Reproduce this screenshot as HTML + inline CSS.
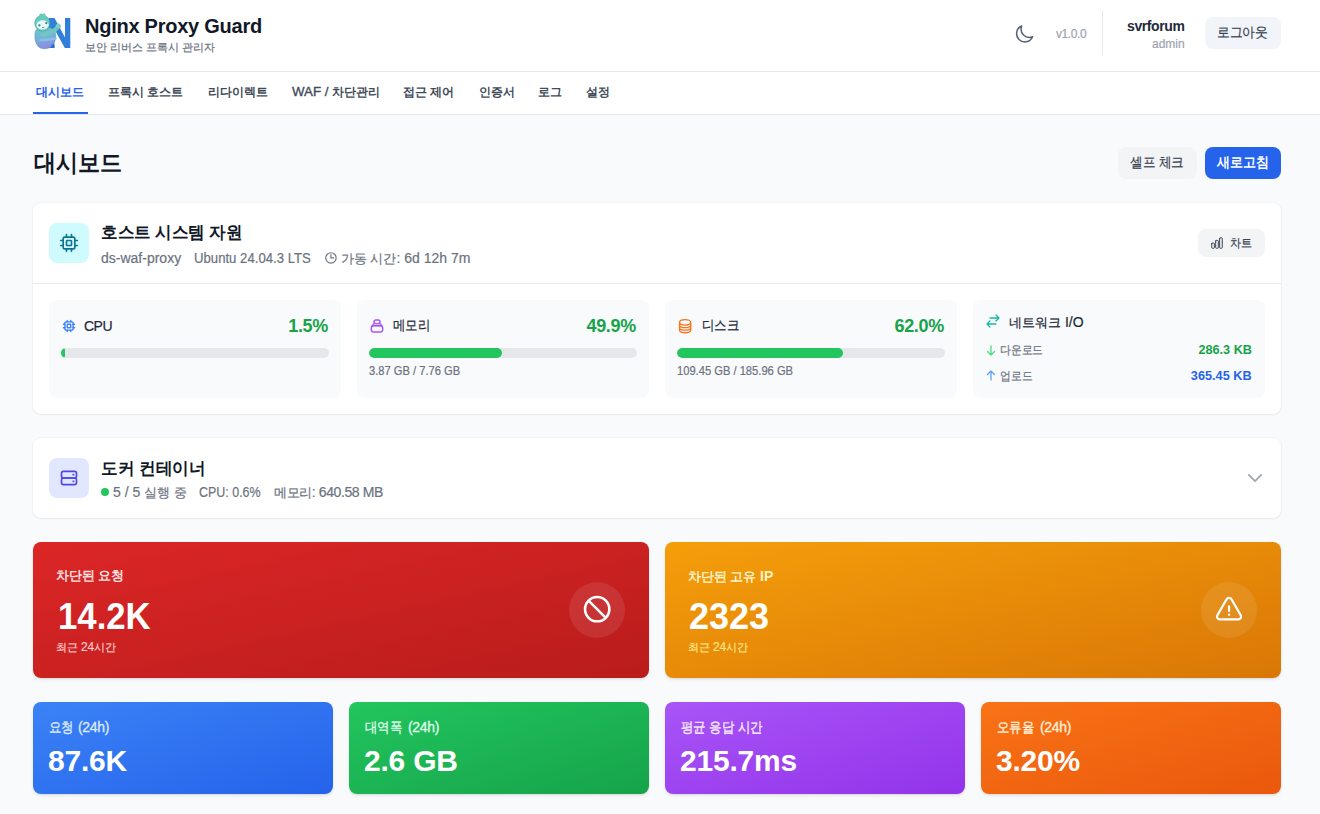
<!DOCTYPE html>
<html><head><meta charset="utf-8">
<style>
*{box-sizing:border-box;margin:0;padding:0}
html,body{width:1320px;height:814px;overflow:hidden}
body{font-family:"Liberation Sans",sans-serif;background:#f8fafc;color:#111827;position:relative}
.a{position:absolute;white-space:nowrap}
#hdr{position:absolute;left:0;top:0;width:1320px;height:72px;background:#fff;border-bottom:1px solid #e2e8f0}
#nav{position:absolute;left:0;top:72px;width:1320px;height:43px;background:#fff;border-bottom:1px solid #e2e8f0}
.nv{position:absolute;top:12px;font-size:12px;font-weight:700;color:#414b5a;line-height:16px;white-space:nowrap}
.card{position:absolute;background:#fff;border-radius:8px;box-shadow:0 1px 2px rgba(0,0,0,.05),0 0 0 1px rgba(17,24,39,.03)}
.tile{position:absolute;background:#f9fafb;border-radius:8px;width:292px;height:98px;top:300px}
.bar{position:absolute;left:12px;top:48px;width:268px;height:10px;border-radius:5px;background:#e5e7eb;overflow:hidden}
.bar i{display:block;height:10px;background:#22c55e;border-radius:5px}
.btn{position:absolute;border-radius:8px}
.big{position:absolute;border-radius:8px;color:#fff;box-shadow:0 2px 4px -1px rgba(0,0,0,.1),0 1px 2px rgba(0,0,0,.06)}
.st{-webkit-text-stroke:.35px currentColor}
.s2{-webkit-text-stroke:.2px currentColor}
</style></head>
<body>
<div id="hdr">
  <svg class="a" style="left:28px;top:8px" width="50" height="50" viewBox="0 0 50 50">
    <defs><linearGradient id="sl" x1="0" y1="0" x2="0.25" y2="1"><stop offset="0" stop-color="#66cdbf"/><stop offset=".5" stop-color="#74b4d8"/><stop offset="1" stop-color="#8d8ce4"/></linearGradient></defs>
    <path d="M20.5 10H26.5L37 29.5V10H42.3V40H36.8L26.3 21V40H20.5Z" fill="#2f7fdb"/>
    <path d="M7.2 24C6 32 8 40.5 16 40.8C24 41 27.5 35 27.8 28C28 22 24 19 18 19.5C12 20 8 20 7.2 24Z" fill="url(#sl)" stroke="#4a8fb0" stroke-width=".5"/>
    <ellipse cx="14.3" cy="15.2" rx="7.6" ry="8" fill="#66cbbf" stroke="#3f9a9c" stroke-width=".5"/>
    <path d="M11.5 7.6l1.6-1.4 1.4 1.2 1.4-1.2 1.2 1.8" stroke="#66cbbf" stroke-width="1.6" fill="none"/>
    <ellipse cx="14.6" cy="16.9" rx="6.1" ry="4.6" fill="#e8f8f4"/>
    <circle cx="11.4" cy="17.3" r="1.15" fill="#367c90"/><circle cx="18.3" cy="15.1" r="1.15" fill="#367c90"/>
    <path d="M14 19.3q1.2.9 2.4 0" stroke="#367c90" stroke-width=".8" fill="none"/>
    <path d="M14.5 26.5c5 0 11-2.5 15-7" stroke="#6fc7c4" stroke-width="4.2" fill="none" stroke-linecap="round"/>
    <circle cx="30" cy="18.2" r="2.5" fill="#7fd3c8" stroke="#4a9fa5" stroke-width=".4"/>
    <path d="M12.5 32c4.5 0 9-.5 15-1.5" stroke="#86c2e0" stroke-width="2.6" fill="none" stroke-linecap="round"/>
    <path d="M23.5 36.5h3v3.5h-3z" fill="#2a6fc4"/>
  </svg>
  <div class="a" style="left:85px;top:14px;font-size:20px;font-weight:700;line-height:24px;color:#111827;letter-spacing:-0.25px">Nginx Proxy Guard</div>
  <div class="a s2" style="left:85px;top:39px;font-size:11px;line-height:16px;color:#6b7280">보안 리버스 프록시 관리자</div>

  <svg class="a" style="left:1014px;top:24px" width="20.5" height="20.5" fill="none" stroke-linecap="round" stroke-linejoin="round" viewBox="0 0 24 24" stroke="#52627a" stroke-width="1.8"><path d="M21.752 15.002A9.72 9.72 0 0 1 18 15.75c-5.385 0-9.75-4.365-9.75-9.75 0-1.33.266-2.597.748-3.752A9.753 9.753 0 0 0 3 11.25C3 16.635 7.365 21 12.75 21a9.753 9.753 0 0 0 9.002-5.998Z"/></svg>
  <div class="a s2" style="left:1056px;top:26px;font-size:12px;line-height:16px;color:#9ca3af;letter-spacing:-0.4px">v1.0.0</div>
  <div class="a" style="left:1102px;top:11px;width:1px;height:44px;background:#e5e7eb"></div>
  <div class="a" style="left:1127px;top:16px;font-size:14px;font-weight:700;line-height:20px;color:#1f2937;letter-spacing:-0.4px">svrforum</div>
  <div class="a s2" style="left:1152px;top:36px;font-size:12px;line-height:16px;color:#9ca3af">admin</div>
  <div class="btn" style="left:1205px;top:17px;width:76px;height:32px;background:#f1f5f9"></div>
  <div class="a s2" style="left:1217px;top:24px;font-size:13.8px;line-height:18px;color:#374151;transform-origin:0 0;transform:scaleX(.91)">로그아웃</div>
</div>

<div id="nav">
  <div class="a" style="left:33px;top:40px;width:55px;height:2px;background:#2563eb"></div>
  <div class="nv" style="left:36px;color:#2563eb">대시보드</div>
  <div class="nv" style="left:108px">프록시 호스트</div>
  <div class="nv" style="left:208px">리다이렉트</div>
  <div class="nv" style="left:292px"><span style="font-size:13.3px;font-weight:400;-webkit-text-stroke:.35px currentColor">WAF / </span>차단관리</div>
  <div class="nv" style="left:403px">접근 제어</div>
  <div class="nv" style="left:479px">인증서</div>
  <div class="nv" style="left:538px">로그</div>
  <div class="nv" style="left:586px">설정</div>
</div>

<div class="a" style="left:34px;top:147px;font-size:23.5px;font-weight:700;line-height:32px;color:#111827;transform-origin:0 0;transform:scaleX(.92)">대시보드</div>
<div class="btn" style="left:1118px;top:147px;width:79px;height:32px;background:#f3f4f6"></div>
<div class="a s2" style="left:1130px;top:154px;font-size:13.8px;line-height:18px;color:#374151;transform-origin:0 0;transform:scaleX(.9)">셀프 체크</div>
<div class="btn" style="left:1205px;top:147px;width:76px;height:32px;background:#2563eb"></div>
<div class="a" style="left:1217px;top:154px;font-size:13.5px;font-weight:700;line-height:18px;color:#fff;transform-origin:0 0;transform:scaleX(.93)">새로고침</div>

<!-- host card -->
<div class="card" style="left:33px;top:203px;width:1248px;height:211px">
  <div class="a" style="left:16px;top:20px;width:40px;height:40px;border-radius:8px;background:#cffafe"></div>
  <svg class="a" style="left:26px;top:30px" width="20" height="20" viewBox="0 0 24 24" fill="none" stroke="#0e7490" stroke-width="2" stroke-linecap="round" stroke-linejoin="round"><rect x="5" y="5" width="14" height="14" rx="2"/><rect x="9" y="9" width="6" height="6" rx="1"/><path d="M9 2v3M15 2v3M9 19v3M15 19v3M2 9h3M2 15h3M19 9h3M19 15h3"/></svg>
  <div class="a" style="left:68px;top:19px;font-size:17.3px;font-weight:700;line-height:20px;color:#111827;transform-origin:0 0;transform:scaleX(.972)">호스트 시스템 자원</div>
  <div class="a s2" style="left:68px;top:46px;font-size:14px;line-height:18px;color:#6b7280">ds-waf-proxy</div>
  <div class="a s2" style="left:161px;top:46px;font-size:14px;line-height:18px;color:#6b7280;transform-origin:0 0;transform:scaleX(.94)">Ubuntu 24.04.3 LTS</div>
  <svg class="a" style="left:291px;top:47.5px" width="13.9" height="13.9" fill="none" stroke-linecap="round" stroke-linejoin="round" viewBox="0 0 24 24" stroke="#6b7280" stroke-width="2"><path d="M12 6v6h4.5m4.5 0a9 9 0 1 1-18 0 9 9 0 0 1 18 0Z"/></svg>
  <div class="a s2" style="left:308px;top:46px;font-size:14px;line-height:18px;color:#6b7280"><span style="font-size:12.5px">가동 시간</span>: 6d 12h 7m</div>
  <div class="btn" style="left:1165px;top:26px;width:67px;height:28px;background:#f3f4f6"></div>
  <svg class="a" style="left:1177.2px;top:33px" width="14" height="14" fill="none" stroke-linecap="round" stroke-linejoin="round" viewBox="0 0 24 24" stroke="#374151" stroke-width="1.7"><path d="M3 13.125C3 12.504 3.504 12 4.125 12h2.25c.621 0 1.125.504 1.125 1.125v6.75C7.5 20.496 6.996 21 6.375 21h-2.25A1.125 1.125 0 0 1 3 19.875v-6.75ZM9.75 8.625c0-.621.504-1.125 1.125-1.125h2.25c.621 0 1.125.504 1.125 1.125v11.25c0 .621-.504 1.125-1.125 1.125h-2.25a1.125 1.125 0 0 1-1.125-1.125V8.625ZM16.5 4.125c0-.621.504-1.125 1.125-1.125h2.25C20.496 3 21 3.504 21 4.125v15.75c0 .621-.504 1.125-1.125 1.125h-2.25a1.125 1.125 0 0 1-1.125-1.125V4.125Z"/></svg>
  <div class="a s2" style="left:1197px;top:31px;font-size:12px;line-height:18px;color:#374151;transform-origin:0 0;transform:scaleX(.92)">차트</div>
  <div class="a" style="left:0;top:80px;width:1248px;height:1px;background:#e5e7eb"></div>
</div>

<div class="tile" style="left:49px">
  <svg class="a" style="left:13px;top:19px" width="14" height="14" viewBox="0 0 24 24" fill="none" stroke="#3b82f6" stroke-width="2.4" stroke-linecap="round"><rect x="5" y="5" width="14" height="14" rx="2"/><rect x="9" y="9" width="6" height="6" rx="1"/><path d="M9 2.5v2.5M15 2.5v2.5M9 19v2.5M15 19v2.5M2.5 9h2.5M2.5 15h2.5M19 9h2.5M19 15h2.5"/></svg>
  <div class="a s2" style="left:35px;top:17px;font-size:14px;line-height:18px;color:#1f2937;letter-spacing:-0.5px">CPU</div>
  <div class="a" style="right:13px;top:15px;font-size:18px;font-weight:700;line-height:22px;color:#16a34a;letter-spacing:-0.3px">1.5%</div>
  <div class="bar"><i style="width:4px"></i></div>
</div>
<div class="tile" style="left:357px">
  <svg class="a" style="left:12px;top:18px" width="16" height="16" viewBox="0 0 24 24" fill="none" stroke="#a855f7" stroke-width="2.2" stroke-linejoin="round"><rect x="7.5" y="3" width="9" height="5.5" rx="2.7"/><path d="M7 8.5h10l2.5 3H4.5z" fill="#e9d5ff" stroke-width="1.6"/><rect x="3.5" y="11.5" width="17" height="9.5" rx="3.5"/></svg>
  <div class="a s2" style="left:36px;top:16px;font-size:14.2px;line-height:18px;color:#1f2937;transform-origin:0 0;transform:scaleX(.89)">메모리</div>
  <div class="a" style="right:13px;top:15px;font-size:18px;font-weight:700;line-height:22px;color:#16a34a;letter-spacing:-0.3px">49.9%</div>
  <div class="bar"><i style="width:133px"></i></div>
  <div class="a s2" style="left:12px;top:63px;font-size:12px;line-height:16px;color:#6b7280;transform-origin:0 0;transform:scaleX(.93)">3.87 GB / 7.76 GB</div>
</div>
<div class="tile" style="left:665px">
  <svg class="a" style="left:12px;top:18px" width="16.3" height="16.3" fill="none" stroke-linecap="round" stroke-linejoin="round" viewBox="0 0 24 24" stroke="#f97316" stroke-width="1.9"><path d="M20.25 6.375c0 2.278-3.694 4.125-8.25 4.125S3.75 8.653 3.75 6.375m16.5 0c0-2.278-3.694-4.125-8.25-4.125S3.75 4.097 3.75 6.375m16.5 0v11.25c0 2.278-3.694 4.125-8.25 4.125s-8.25-1.847-8.25-4.125V6.375m16.5 0v3.75m-16.5-3.75v3.75m16.5 0v3.75C20.25 16.153 16.556 18 12 18s-8.25-1.847-8.25-4.125v-3.75m16.5 0c0 2.278-3.694 4.125-8.25 4.125s-8.25-1.847-8.25-4.125"/></svg>
  <div class="a s2" style="left:37px;top:16px;font-size:14.2px;line-height:18px;color:#1f2937;transform-origin:0 0;transform:scaleX(.89)">디스크</div>
  <div class="a" style="right:13px;top:15px;font-size:18px;font-weight:700;line-height:22px;color:#16a34a;letter-spacing:-0.3px">62.0%</div>
  <div class="bar"><i style="width:166px"></i></div>
  <div class="a s2" style="left:12px;top:63px;font-size:12px;line-height:16px;color:#6b7280;transform-origin:0 0;transform:scaleX(.93)">109.45 GB / 185.96 GB</div>
</div>
<div class="tile" style="left:973px">
  <svg class="a" style="left:12.3px;top:13.4px" width="16" height="16" fill="none" stroke-linecap="round" stroke-linejoin="round" viewBox="0 0 24 24" stroke="#14b8a6" stroke-width="1.9"><path d="M7.5 21 3 16.5m0 0L7.5 12M3 16.5h13.5m0-13.5L21 7.5m0 0L16.5 12M21 7.5H7.5"/></svg>
  <div class="a s2" style="left:36px;top:13px;font-size:13px;line-height:18px;color:#1f2937"><span>네트워크</span><span style="font-size:14px"> I/O</span></div>
  <svg class="a" style="left:13px;top:45px" width="10" height="11" viewBox="0 0 10 11" fill="none" stroke="#4ade80" stroke-width="1.3" stroke-linecap="round" stroke-linejoin="round"><path d="M5 1v9M1.5 6.5L5 10l3.5-3.5"/></svg><div class="a s2" style="left:27px;top:42px;font-size:12.2px;line-height:16px;color:#6b7280;transform-origin:0 0;transform:scaleX(.9)">다운로드</div>
  <div class="a" style="right:13px;top:42px;font-size:13.5px;font-weight:700;line-height:16px;color:#16a34a;transform-origin:100% 0;transform:scaleX(.94)">286.3 KB</div>
  <svg class="a" style="left:13px;top:70px" width="10" height="11" viewBox="0 0 10 11" fill="none" stroke="#60a5fa" stroke-width="1.3" stroke-linecap="round" stroke-linejoin="round"><path d="M5 10V1M1.5 4.5L5 1l3.5 3.5"/></svg><div class="a s2" style="left:27px;top:68px;font-size:12.2px;line-height:16px;color:#6b7280;transform-origin:0 0;transform:scaleX(.9)">업로드</div>
  <div class="a" style="right:13px;top:68px;font-size:13.5px;font-weight:700;line-height:16px;color:#2563eb;transform-origin:100% 0;transform:scaleX(.94)">365.45 KB</div>
</div>

<!-- docker card -->
<div class="card" style="left:33px;top:438px;width:1248px;height:80px">
  <div class="a" style="left:16px;top:20px;width:40px;height:40px;border-radius:8px;background:#e0e7ff"></div>
  <svg class="a" style="left:26px;top:30px" width="20" height="20" viewBox="0 0 24 24" fill="none" stroke="#4f46e5" stroke-width="2"><rect x="3" y="4" width="18" height="8" rx="2.5"/><rect x="3" y="12" width="18" height="8" rx="2.5"/><path d="M17 8h.5M17 16h.5" stroke-linecap="round"/></svg>
  <div class="a" style="left:68px;top:20.5px;font-size:17.1px;font-weight:700;line-height:20px;color:#111827;transform-origin:0 0;transform:scaleX(.98)">도커 컨테이너</div>
  <div class="a" style="left:68px;top:50px;width:8px;height:8px;border-radius:4px;background:#22c55e"></div>
  <div class="a s2" style="left:80px;top:45px;font-size:14px;line-height:18px;color:#6b7280">5 / 5 <span style="font-size:12.5px">실행 중</span></div>
  <div class="a s2" style="left:166px;top:45px;font-size:14px;line-height:18px;color:#6b7280;transform-origin:0 0;transform:scaleX(.89)">CPU: 0.6%</div>
  <div class="a s2" style="left:241px;top:45px;font-size:14px;line-height:18px;color:#6b7280;letter-spacing:-0.4px"><span style="font-size:12.5px">메모리</span>: 640.58 MB</div>
  <svg class="a" style="left:1212px;top:30px" width="20" height="20" fill="none" stroke-linecap="round" stroke-linejoin="round" viewBox="0 0 24 24" stroke="#9ca3af" stroke-width="2"><path d="m19.5 8.25-7.5 7.5-7.5-7.5"/></svg>
</div>

<!-- big blocked cards -->
<div class="big" style="left:33px;top:542px;width:616px;height:136px;background:linear-gradient(to bottom right,#dc2626,#b91c1c)">
  <div class="a" style="left:23px;top:26px;font-size:12.6px;font-weight:700;line-height:16px;color:#fee2e2">차단된 요청</div>
  <div class="a" style="left:25px;top:53px;font-size:36px;font-weight:700;line-height:44px;transform-origin:0 0;transform:scaleX(.965)">14.2K</div>
  <div class="a s2" style="left:23px;top:97px;font-size:12px;line-height:16px;color:#fecaca"><span style="font-size:10.5px">최근 </span>24<span style="font-size:10.5px">시간</span></div>
  <div class="a" style="left:536px;top:40px;width:56px;height:56px;border-radius:28px;background:rgba(255,255,255,.09)"></div>
  <svg class="a" style="left:547.8px;top:51.4px" width="32.4" height="32.4" fill="none" stroke-linecap="round" stroke-linejoin="round" viewBox="0 0 24 24" stroke="#fff" stroke-width="1.9"><path d="M18.364 18.364A9 9 0 0 0 5.636 5.636m12.728 12.728A9 9 0 0 1 5.636 5.636m12.728 12.728L5.636 5.636"/></svg>
</div>
<div class="big" style="left:665px;top:542px;width:616px;height:136px;background:linear-gradient(to bottom right,#f59e0b,#d97706)">
  <div class="a" style="left:23px;top:26px;font-size:12.6px;font-weight:700;line-height:16px;color:#fef3c7">차단된 고유 <span style="font-size:14px">IP</span></div>
  <div class="a" style="left:24px;top:53px;font-size:36px;font-weight:700;line-height:44px">2323</div>
  <div class="a s2" style="left:23px;top:97px;font-size:12px;line-height:16px;color:#fde68a"><span style="font-size:10.5px">최근 </span>24<span style="font-size:10.5px">시간</span></div>
  <div class="a" style="left:536px;top:40px;width:56px;height:56px;border-radius:28px;background:rgba(255,255,255,.09)"></div>
  <svg class="a" style="left:548.9px;top:52.6px" width="30.1" height="30.1" fill="none" stroke-linecap="round" stroke-linejoin="round" viewBox="0 0 24 24" stroke="#fff" stroke-width="1.8"><path d="M12 9v3.75m-9.303 3.376c-.866 1.5.217 3.374 1.948 3.374h14.71c1.73 0 2.813-1.874 1.948-3.374L13.949 3.378c-.866-1.5-3.032-1.5-3.898 0L2.697 16.126ZM12 15.75h.007v.008H12v-.008Z"/></svg>
</div>

<!-- small stat cards -->
<div class="big" style="left:33px;top:702px;width:300px;height:92px;background:linear-gradient(to bottom right,#3b82f6,#2563eb)">
  <div class="a st" style="left:16px;top:16px;font-size:14px;line-height:18px;color:#dbeafe;transform-origin:0 0;transform:scaleX(.89)">요청</div><div class="a st" style="left:45px;top:16px;font-size:14px;line-height:18px;color:#dbeafe;letter-spacing:-.3px">(24h)</div>
  <div class="a" style="left:15px;top:41px;font-size:30px;font-weight:700;line-height:36px;letter-spacing:-0.2px">87.6K</div>
</div>
<div class="big" style="left:349px;top:702px;width:300px;height:92px;background:linear-gradient(to bottom right,#22c55e,#16a34a)">
  <div class="a st" style="left:16px;top:16px;font-size:14px;line-height:18px;color:#dcfce7;transform-origin:0 0;transform:scaleX(.89)">대역폭</div><div class="a st" style="left:59px;top:16px;font-size:14px;line-height:18px;color:#dcfce7;letter-spacing:-.3px">(24h)</div>
  <div class="a" style="left:15px;top:41px;font-size:30px;font-weight:700;line-height:36px;letter-spacing:-0.2px">2.6 GB</div>
</div>
<div class="big" style="left:665px;top:702px;width:300px;height:92px;background:linear-gradient(to bottom right,#a855f7,#9333ea)">
  <div class="a st" style="left:16px;top:16px;font-size:14px;line-height:18px;color:#f3e8ff;transform-origin:0 0;transform:scaleX(.89)">평균 응답 시간</div>
  <div class="a" style="left:15px;top:41px;font-size:30px;font-weight:700;line-height:36px;letter-spacing:-0.2px">215.7ms</div>
</div>
<div class="big" style="left:981px;top:702px;width:300px;height:92px;background:linear-gradient(to bottom right,#f97316,#ea580c)">
  <div class="a st" style="left:16px;top:16px;font-size:14px;line-height:18px;color:#ffedd5;transform-origin:0 0;transform:scaleX(.89)">오류율</div><div class="a st" style="left:59px;top:16px;font-size:14px;line-height:18px;color:#ffedd5;letter-spacing:-.3px">(24h)</div>
  <div class="a" style="left:15px;top:41px;font-size:30px;font-weight:700;line-height:36px;letter-spacing:-0.2px">3.20%</div>
</div>
</body></html>
